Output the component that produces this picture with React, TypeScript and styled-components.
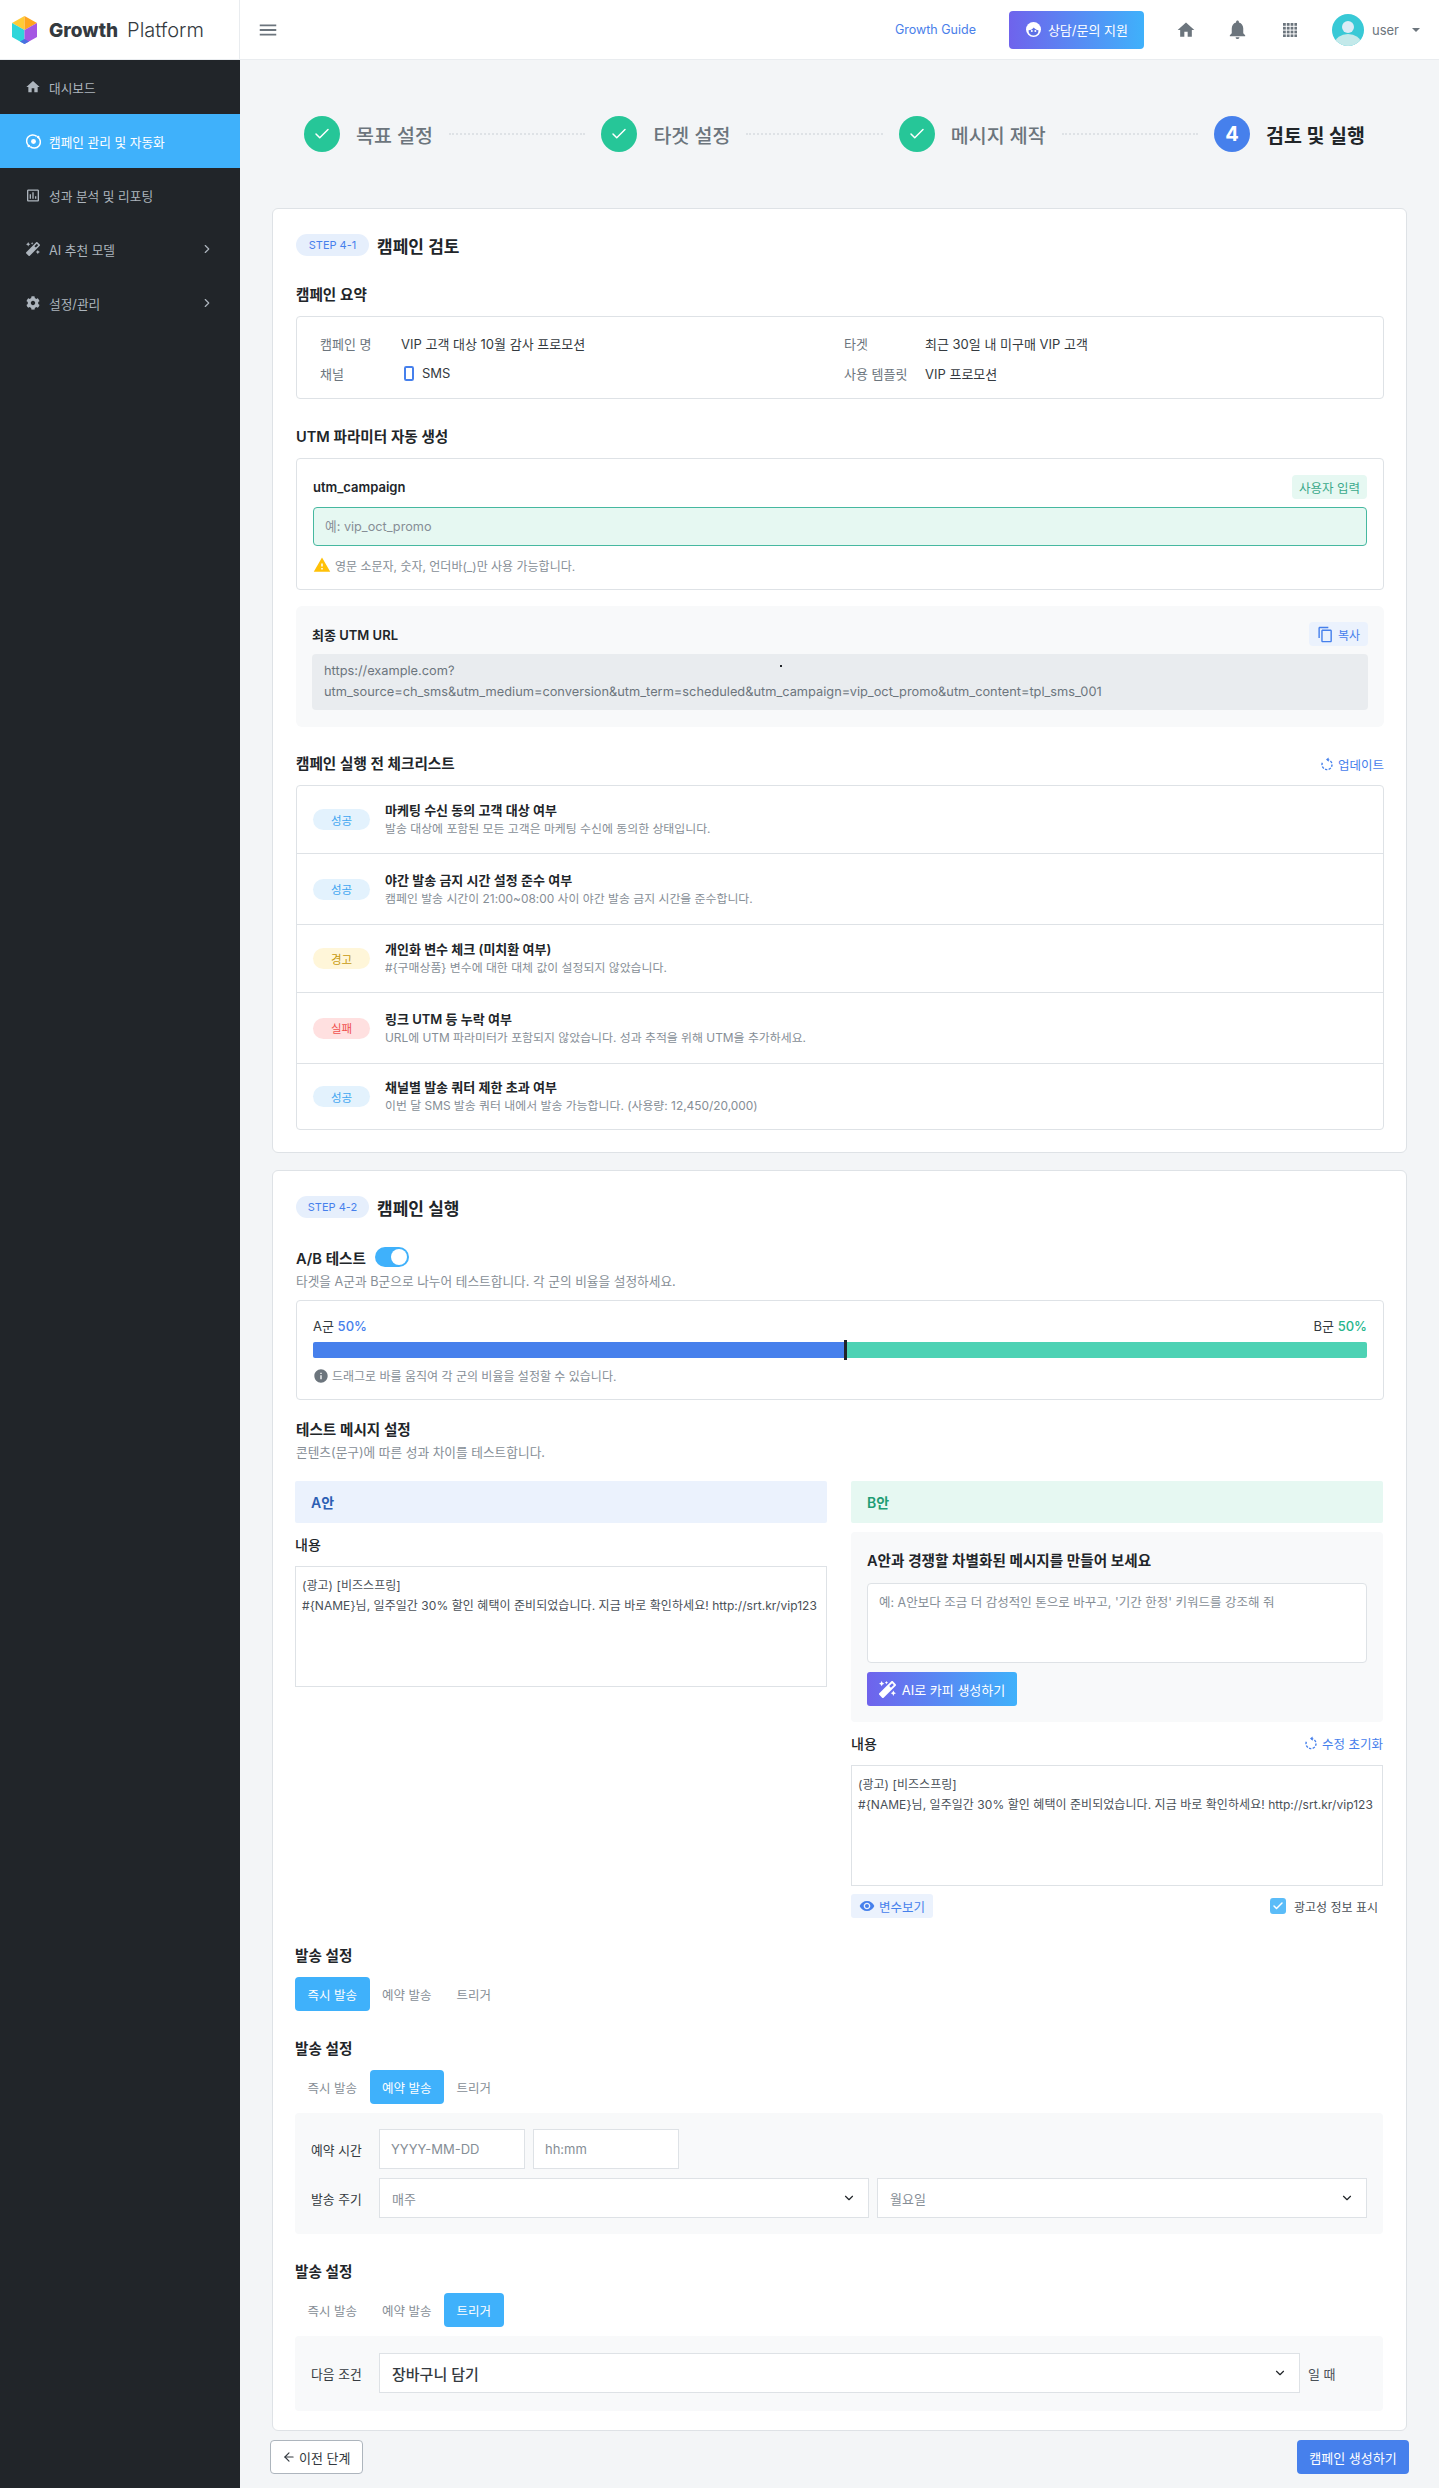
import styled, { createGlobalStyle } from 'styled-components';
import { ChevronDown, ChevronRight, Check, ArrowLeft } from 'lucide-react';
import { FaCog, FaMagic } from 'react-icons/fa';
import {
  MdContentCopy,
  MdHome,
  MdInfo,
  MdMenu,
  MdNotifications,
  MdOutlineAssessment,
  MdVisibility,
  MdWarning,
} from 'react-icons/md';

const GlobalStyle = createGlobalStyle`
  * { box-sizing: border-box; }
  body {
    margin: 0;
    background: #f3f5f7;
    color: #212529;
    font-family: Inter, "Noto Sans CJK KR", "Noto Sans", sans-serif;
    font-size: 14px;
  }
  input, textarea { font-family: inherit; }
`;

const Shell = styled.div`
  display: grid;
  grid-template-columns: 240px 1fr;
  grid-template-rows: 60px 1fr;
  min-height: 2488px;
`;

const LogoBar = styled.div`
  display: flex;
  align-items: center;
  gap: 12px;
  padding-left: 12px;
  background: #fff;
  border-right: 1px solid #e9ecef;
  border-bottom: 1px solid #e9ecef;
`;

const LogoText = styled.div`
  font-size: 20px;
  color: #343a40;
  font-weight: 300;
  white-space: nowrap;
  b {
    font-size: 19px;
    font-weight: 800;
    margin-right: 9px;
  }
`;

const TopBar = styled.header`
  display: flex;
  align-items: center;
  background: #fff;
  border-bottom: 1px solid #e9ecef;
  padding-left: 17px;
  color: #6c757d;
`;

const GuideLink = styled.a`
  margin-left: auto;
  color: #4a80ea;
  font-size: 12.5px;
`;

const SupportButton = styled.button`
  display: flex;
  align-items: center;
  justify-content: center;
  gap: 6px;
  width: 135px;
  height: 38px;
  margin-left: 33px;
  border: 0;
  border-radius: 4px;
  background: linear-gradient(90deg, #6f63ec, #3fb1fb);
  color: #fff;
  font-size: 13px;
  font-family: inherit;
`;

const TopIcons = styled.div`
  display: grid;
  grid-template-columns: repeat(3, 52px);
  justify-items: center;
  align-items: center;
  margin-left: 16px;
  color: #6c757d;
`;

const UserMenu = styled.div`
  display: flex;
  align-items: center;
  margin: 0 19px 0 16px;
  font-size: 13px;
  color: #6c757d;
  span {
    margin: 0 13px 0 8px;
  }
`;

const Caret = styled.i`
  width: 0;
  height: 0;
  border-left: 4px solid transparent;
  border-right: 4px solid transparent;
  border-top: 4px solid #6c757d;
`;

const Sidebar = styled.nav`
  background: #212529;
`;

const NavItem = styled.div<{ $active?: boolean }>`
  display: flex;
  align-items: center;
  gap: 8px;
  height: 54px;
  padding: 0 25px;
  font-size: 12.7px;
  background: ${(p) => (p.$active ? '#3fb1fb' : 'transparent')};
  color: ${(p) => (p.$active ? '#fff' : '#adb5bd')};
  svg.more {
    margin-left: auto;
    margin-right: 1px;
  }
`;

const NavIcon = styled.span`
  display: flex;
  align-items: center;
  justify-content: center;
  width: 16px;
`;

const Main = styled.main`
  padding: 0 32px;
`;

const Steps = styled.div`
  display: flex;
  align-items: center;
  padding: 56px 42px 56px 32px;
`;

const Step = styled.div`
  display: flex;
  align-items: center;
  gap: 16px;
`;

const StepDot = styled.div<{ $current?: boolean }>`
  display: flex;
  align-items: center;
  justify-content: center;
  width: 36px;
  height: 36px;
  border-radius: 50%;
  background: ${(p) => (p.$current ? '#4680ec' : '#26c698')};
  color: #fff;
  font-size: 20px;
  font-weight: 700;
`;

const StepLabel = styled.div<{ $current?: boolean }>`
  font-size: 19.5px;
  font-weight: ${(p) => (p.$current ? 700 : 500)};
  color: ${(p) => (p.$current ? '#212529' : '#6c757d')};
  white-space: nowrap;
`;

const StepLine = styled.div`
  flex: 1;
  margin: 0 16px;
  border-top: 2px dotted #dee2e6;
`;

const Card = styled.section<{ $pb: number }>`
  position: relative;
  background: #fff;
  border: 1px solid #dee2e6;
  border-radius: 6px;
  padding: 25px 22px ${(p) => p.$pb}px 23px;
  margin-bottom: 17px;
`;

const CardHead = styled.div`
  display: flex;
  align-items: center;
  gap: 8px;
  height: 22px;
  margin-bottom: 28px;
`;

const StepPill = styled.span`
  display: flex;
  align-items: center;
  justify-content: center;
  width: 73px;
  height: 22px;
  border-radius: 11px;
  background: #e6effc;
  color: #4680ec;
  font-size: 11px;
`;

const CardTitle = styled.h2`
  margin: 0;
  font-size: 17px;
  font-weight: 600;
`;

const SectionTitle = styled.h3<{ $mb?: number }>`
  margin: 0 0 ${(p) => p.$mb ?? 10}px;
  font-size: 14.6px;
  line-height: 22px;
  font-weight: 600;
`;

const SummaryBox = styled.div`
  display: grid;
  grid-template-columns: 81px 443px 81px 1fr;
  grid-auto-rows: 30px;
  align-items: center;
  height: 83px;
  padding: 11px 23px;
  border: 1px solid #dee2e6;
  border-radius: 4px;
  margin-bottom: 27px;
  font-size: 13px;
`;

const SummaryLabel = styled.div`
  color: #6c757d;
`;

const SummaryValue = styled.div`
  display: flex;
  align-items: center;
  gap: 8px;
  color: #343a40;
`;

const PhoneIcon = styled.svg`
  margin-left: 3px;
`;

const Panel = styled.div`
  height: 132px;
  padding: 16px;
  border: 1px solid #dee2e6;
  border-radius: 4px;
  margin-bottom: 16px;
`;

const PanelHead = styled.div`
  display: flex;
  align-items: center;
  justify-content: space-between;
  height: 24px;
  margin-bottom: 8px;
  font-size: 13px;
  font-weight: 600;
`;

const InputBadge = styled.span`
  display: flex;
  align-items: center;
  height: 24px;
  padding: 0 7px;
  border-radius: 4px;
  background: #e6f8f2;
  color: #3aa98a;
  font-size: 12.5px;
  font-weight: 400;
`;

const GreenInput = styled.input`
  display: block;
  width: 100%;
  height: 39px;
  padding: 0 11px;
  border: 1px solid #46b8a0;
  border-radius: 4px;
  background: #e6f8f2;
  font-size: 12.7px;
  &::placeholder {
    color: #868e96;
  }
`;

const Hint = styled.div`
  display: flex;
  align-items: center;
  gap: 4px;
  margin-top: 10px;
  font-size: 12px;
  color: #868e96;
`;

const UrlPanel = styled.div`
  position: relative;
  height: 121px;
  padding: 16px;
  border-radius: 6px;
  background: #f8f9fa;
  margin-bottom: 26px;
`;

const CopyButton = styled.span`
  display: flex;
  align-items: center;
  gap: 4px;
  height: 24px;
  padding: 0 8px;
  border-radius: 4px;
  background: #ebf2fd;
  color: #4680ec;
  font-size: 12px;
  font-weight: 400;
`;

const UrlBox = styled.div`
  height: 56px;
  padding: 7px 12px;
  border-radius: 4px;
  background: #e9ecef;
  color: #6c757d;
  font-size: 12.8px;
  text-rendering: geometricPrecision;
  line-height: 21px;
  white-space: nowrap;
`;

const Speck = styled.i`
  position: absolute;
  left: 484px;
  top: 59px;
  width: 2px;
  height: 2px;
  background: #212529;
`;

const TitleRow = styled.div`
  display: flex;
  align-items: center;
  justify-content: space-between;
  margin-bottom: 10px;
  h3 {
    margin: 0;
  }
`;

const LinkAction = styled.span`
  display: flex;
  align-items: center;
  gap: 4px;
  color: #4680ec;
  font-size: 12.5px;
  font-weight: 400;
`;

const CheckList = styled.div`
  border: 1px solid #dee2e6;
  border-radius: 4px;
`;

const CheckRow = styled.div<{ $h: number }>`
  display: flex;
  align-items: center;
  gap: 15px;
  height: ${(p) => p.$h}px;
  padding: 0 16px;
  & + & {
    border-top: 1px solid #dee2e6;
  }
`;

const tones = {
  ok: ['#e3f2fd', '#3fa5f0'],
  warn: ['#fff6d9', '#c79a10'],
  fail: ['#ffe0e0', '#f0524f'],
};

const StatusBadge = styled.span<{ $tone: keyof typeof tones }>`
  display: flex;
  align-items: center;
  justify-content: center;
  flex: none;
  width: 57px;
  height: 21px;
  border-radius: 11px;
  background: ${(p) => tones[p.$tone][0]};
  color: ${(p) => tones[p.$tone][1]};
  font-size: 11.5px;
`;

const CheckTitle = styled.div`
  font-size: 13px;
  font-weight: 600;
  line-height: 19px;
`;

const CheckSub = styled.div`
  font-size: 11.9px;
  line-height: 18px;
  color: #868e96;
`;

const AbRow = styled.div`
  display: flex;
  align-items: center;
  gap: 9px;
  height: 22px;
  margin-bottom: 4px;
  font-size: 14.6px;
  font-weight: 600;
`;

const Toggle = styled.span`
  position: relative;
  display: block;
  width: 34px;
  height: 20px;
  border-radius: 10px;
  background: #3fb1fb;
  &::after {
    content: '';
    position: absolute;
    top: 2px;
    right: 2px;
    width: 16px;
    height: 16px;
    border-radius: 50%;
    background: #fff;
  }
`;

const Muted = styled.div<{ $mb: number }>`
  margin-bottom: ${(p) => p.$mb}px;
  font-size: 12.7px;
  line-height: 20px;
  color: #868e96;
`;

const SplitBox = styled.div`
  height: 100px;
  padding: 16px;
  border: 1px solid #dee2e6;
  border-radius: 4px;
  margin-bottom: 19px;
`;

const SplitLabels = styled.div`
  display: flex;
  justify-content: space-between;
  margin-bottom: 6px;
  font-size: 13px;
  line-height: 19px;
  color: #343a40;
`;

const Percent = styled.span<{ $color: string }>`
  color: ${(p) => p.$color};
  font-weight: 500;
`;

const SplitBar = styled.div`
  position: relative;
  display: flex;
  height: 16px;
  margin-bottom: 9px;
`;

const SplitPart = styled.div<{ $color: string; $left?: boolean }>`
  background: ${(p) => p.$color};
  border-radius: ${(p) => (p.$left ? '2px 0 0 2px' : '0 2px 2px 0')};
`;

const SplitHandle = styled.i`
  position: absolute;
  top: -2px;
  width: 3px;
  height: 20px;
  margin-left: -1px;
  background: #212529;
`;

const SplitHint = styled.div`
  display: flex;
  align-items: center;
  gap: 3px;
  font-size: 12px;
  color: #868e96;
`;

const SendArea = styled.div`
  margin: 0 1px 0 -1px;
`;

const Columns = styled.div`
  display: grid;
  grid-template-columns: 1fr 1fr;
  gap: 24px;
  margin-bottom: 27px;
`;

const VariantBand = styled.div<{ $b?: boolean }>`
  display: flex;
  align-items: center;
  height: 42px;
  padding: 0 16px;
  border-radius: 2px;
  background: ${(p) => (p.$b ? '#e6f8f2' : '#ebf2fd')};
  color: ${(p) => (p.$b ? '#1f9d74' : '#2c5fb3')};
  font-size: 14px;
  font-weight: 600;
`;

const FieldHead = styled.div<{ $mt: number }>`
  display: flex;
  align-items: center;
  justify-content: space-between;
  height: 22px;
  margin: ${(p) => p.$mt}px 0 11px;
  font-size: 14px;
  font-weight: 500;
`;

const MessageBox = styled.div`
  height: 121px;
  padding: 9px 5px 9px 6px;
  border: 1px solid #dee2e6;
  font-size: 12px;
  letter-spacing: 0.05px;
  line-height: 20px;
  color: #495057;
`;

const GenPanel = styled.div`
  height: 190px;
  margin-top: 9px;
  padding: 18px 16px 0;
  border-radius: 4px;
  background: #f8f9fa;
`;

const GenTitle = styled.div`
  margin-bottom: 11px;
  font-size: 14.6px;
  line-height: 22px;
  font-weight: 600;
`;

const GenInput = styled.textarea`
  display: block;
  width: 100%;
  height: 80px;
  padding: 8px 11px;
  border: 1px solid #dee2e6;
  border-radius: 4px;
  background: #fff;
  font-size: 12.5px;
  resize: none;
  &::placeholder {
    color: #868e96;
  }
`;

const GenButton = styled.button`
  display: flex;
  align-items: center;
  justify-content: center;
  gap: 6px;
  width: 150px;
  height: 34px;
  margin-top: 9px;
  border: 0;
  border-radius: 3px;
  background: linear-gradient(90deg, #6f63ec, #3fb1fb);
  color: #fff;
  font-family: inherit;
  font-size: 13px;
`;

const MessageFoot = styled.div`
  display: flex;
  align-items: center;
  justify-content: space-between;
  margin-top: 8px;
  padding-right: 5px;
`;

const VarButton = styled.span`
  display: flex;
  align-items: center;
  gap: 4px;
  height: 24px;
  padding: 0 8px;
  border-radius: 3px;
  background: #ebf2fd;
  color: #4680ec;
  font-size: 12.5px;
`;

const AdCheck = styled.label`
  display: flex;
  align-items: center;
  gap: 8px;
  font-size: 12px;
  color: #495057;
`;

const CheckBox = styled.span`
  display: flex;
  align-items: center;
  justify-content: center;
  width: 16px;
  height: 16px;
  border-radius: 3px;
  background: #5bbcf8;
  color: #fff;
`;

const TabGroup = styled.div<{ $mb: number }>`
  display: flex;
  margin-bottom: ${(p) => p.$mb}px;
`;

const Tab = styled.span<{ $active?: boolean }>`
  display: flex;
  align-items: center;
  height: 34px;
  padding: 0 12.5px;
  border-radius: 4px;
  font-size: 12.5px;
  background: ${(p) => (p.$active ? '#3fb1fb' : 'transparent')};
  color: ${(p) => (p.$active ? '#fff' : '#868e96')};
`;

const GrayPanel = styled.div<{ $h: number; $mb: number }>`
  height: ${(p) => p.$h}px;
  margin-bottom: ${(p) => p.$mb}px;
  padding: 16px 16px 0;
  border-radius: 4px;
  background: #f8f9fa;
`;

const FormRow = styled.div<{ $mt?: number }>`
  display: flex;
  align-items: center;
  gap: 8px;
  margin-top: ${(p) => p.$mt ?? 0}px;
`;

const FormLabel = styled.div`
  flex: none;
  width: 60px;
  font-size: 12.8px;
  color: #343a40;
`;

const PlainInput = styled.input`
  width: 146px;
  height: 40px;
  padding: 0 11px;
  border: 1px solid #dee2e6;
  background: #fff;
  font-size: 13px;
  &::placeholder {
    color: #868e96;
  }
`;

const FakeSelect = styled.div<{ $strong?: boolean }>`
  flex: 1;
  display: flex;
  align-items: center;
  justify-content: space-between;
  height: 40px;
  padding: 0 12px;
  border: 1px solid #dee2e6;
  background: #fff;
  font-size: ${(p) => (p.$strong ? '15px' : '13px')};
  font-weight: ${(p) => (p.$strong ? 500 : 400)};
  color: ${(p) => (p.$strong ? '#343a40' : '#868e96')};
  svg {
    color: #212529;
  }
`;

const WhenText = styled.div`
  flex: none;
  width: 59px;
  font-size: 13px;
  color: #495057;
`;

const Footer = styled.div`
  display: flex;
  justify-content: space-between;
  margin: -8px -2px 14px -2px;
`;

const BackButton = styled.button`
  display: flex;
  align-items: center;
  gap: 3px;
  height: 34px;
  padding: 0 11px;
  border: 1px solid #adb5bd;
  border-radius: 4px;
  background: #fff;
  color: #343a40;
  font-family: inherit;
  font-size: 13px;
`;

const CreateButton = styled.button`
  width: 112px;
  height: 34px;
  border: 0;
  border-radius: 4px;
  background: #4680ec;
  color: #fff;
  font-family: inherit;
  font-size: 13px;
`;

function LogoCube() {
  return (
    <svg width="25" height="28" viewBox="0 0 25 28">
      <polygon points="12.5,0 0,7 12.5,14" fill="#ffcb37" />
      <polygon points="12.5,0 25,7 12.5,14" fill="#ffa51f" />
      <polygon points="0,7 12.5,14 12.5,28 0,21" fill="#2fd6da" />
      <polygon points="25,7 12.5,14 12.5,28 25,21" fill="#a557e3" />
      <polygon points="8,25.5 12.5,23 17,25.5 12.5,28" fill="#4a6fe0" />
    </svg>
  );
}

function CampaignIcon() {
  return (
    <svg width="15" height="15" viewBox="0 0 16 16" fill="none" stroke="currentColor" strokeWidth="1.6">
      <path d="M3 12.5A6.5 6.5 0 0 1 11.5 2.5" />
      <path d="M13 3.5A6.5 6.5 0 0 1 4.5 13.5" />
      <circle cx="8" cy="8" r="2.6" fill="currentColor" stroke="none" />
      <circle cx="13" cy="3.2" r="1.4" fill="currentColor" stroke="none" />
      <circle cx="3" cy="12.8" r="1.4" fill="currentColor" stroke="none" />
    </svg>
  );
}

function AgentIcon() {
  return (
    <svg width="17" height="17" viewBox="0 0 17 17">
      <circle cx="8.5" cy="8.5" r="7.5" fill="#fff" />
      <path d="M3.6 9.2c2 0 4.2-1 5.2-2.6 1 1.4 2.6 2.6 4.6 2.6v1a4.9 4.4 0 0 1-9.8 0z" fill="#5c6fe6" />
      <circle cx="6.8" cy="10" r="1" fill="#fff" />
      <circle cx="10.4" cy="10" r="1" fill="#fff" />
    </svg>
  );
}

function Avatar() {
  return (
    <svg width="32" height="32" viewBox="0 0 32 32">
      <clipPath id="avatarClip">
        <circle cx="16" cy="16" r="16" />
      </clipPath>
      <g clipPath="url(#avatarClip)">
        <rect width="32" height="32" fill="#38c9d6" />
        <ellipse cx="16" cy="29" rx="13" ry="9" fill="#c3e9ea" />
        <circle cx="16" cy="13" r="6" fill="#dcecf6" />
      </g>
    </svg>
  );
}

function GridDots() {
  const pts = [0, 1, 2, 3];
  return (
    <svg width="14" height="14" viewBox="0 0 14 14" fill="currentColor">
      {pts.flatMap((r) => pts.map((c) => <rect key={`${r}-${c}`} x={c * 3.8} y={r * 3.8} width="2.8" height="2.8" />))}
    </svg>
  );
}

function ResetIcon() {
  return (
    <svg width="14" height="14" viewBox="0 0 14 14" fill="none" stroke="currentColor" strokeWidth="1.4">
      <path d="M7 2.6a5 5 0 1 1-4.6 3" strokeDasharray="2.4 1.3" />
      <path d="M8.6 0.4 6 2.6l2.6 2.2" fill="currentColor" stroke="none" />
    </svg>
  );
}

const campaignName = 'VIP 고객 대상 10월 감사 프로모션';

const checks = [
  { tone: 'ok', label: '성공', h: 67, title: '마케팅 수신 동의 고객 대상 여부', sub: '발송 대상에 포함된 모든 고객은 마케팅 수신에 동의한 상태입니다.' },
  { tone: 'ok', label: '성공', h: 71, title: '야간 발송 금지 시간 설정 준수 여부', sub: '캠페인 발송 시간이 21:00~08:00 사이 야간 발송 금지 시간을 준수합니다.' },
  { tone: 'warn', label: '경고', h: 68, title: '개인화 변수 체크 (미치환 여부)', sub: '#{구매상품} 변수에 대한 대체 값이 설정되지 않았습니다.' },
  { tone: 'fail', label: '실패', h: 71, title: '링크 UTM 등 누락 여부', sub: 'URL에 UTM 파라미터가 포함되지 않았습니다. 성과 추적을 위해 UTM을 추가하세요.' },
  { tone: 'ok', label: '성공', h: 66, title: '채널별 발송 쿼터 제한 초과 여부', sub: '이번 달 SMS 발송 쿼터 내에서 발송 가능합니다. (사용량: 12,450/20,000)' },
] as const;

const sendModes = ['즉시 발송', '예약 발송', '트리거'];

function SendTabs({ active, mb }: { active: number; mb: number }) {
  return (
    <TabGroup $mb={mb}>
      {sendModes.map((mode, i) => (
        <Tab key={mode} $active={i === active}>
          {mode}
        </Tab>
      ))}
    </TabGroup>
  );
}

function Message() {
  return (
    <>
      (광고) [비즈스프링]
      <br />
      {'#{NAME}님, 일주일간 30% 할인 혜택이 준비되었습니다. 지금 바로 확인하세요! http://srt.kr/vip123'}
    </>
  );
}

export default function App() {
  const splitA = 50.5;

  return (
    <>
      <GlobalStyle />
      <Shell>
        <LogoBar>
          <LogoCube />
          <LogoText>
            <b>Growth</b>Platform
          </LogoText>
        </LogoBar>
        <TopBar>
          <MdMenu size={22} />
          <GuideLink>Growth Guide</GuideLink>
          <SupportButton>
            <AgentIcon />
            상담/문의 지원
          </SupportButton>
          <TopIcons>
            <MdHome size={20} />
            <MdNotifications size={23} />
            <GridDots />
          </TopIcons>
          <UserMenu>
            <Avatar />
            <span>user</span>
            <Caret />
          </UserMenu>
        </TopBar>

        <Sidebar>
          <NavItem>
            <NavIcon>
              <MdHome size={16} />
            </NavIcon>
            대시보드
          </NavItem>
          <NavItem $active>
            <NavIcon>
              <CampaignIcon />
            </NavIcon>
            캠페인 관리 및 자동화
          </NavItem>
          <NavItem>
            <NavIcon>
              <MdOutlineAssessment size={17} />
            </NavIcon>
            성과 분석 및 리포팅
          </NavItem>
          <NavItem>
            <NavIcon>
              <FaMagic size={14} />
            </NavIcon>
            AI 추천 모델
            <ChevronRight className="more" size={14} />
          </NavItem>
          <NavItem>
            <NavIcon>
              <FaCog size={14} />
            </NavIcon>
            설정/관리
            <ChevronRight className="more" size={14} />
          </NavItem>
        </Sidebar>

        <Main>
          <Steps>
            <Step>
              <StepDot>
                <Check size={18} strokeWidth={2} />
              </StepDot>
              <StepLabel>목표 설정</StepLabel>
            </Step>
            <StepLine />
            <Step>
              <StepDot>
                <Check size={18} strokeWidth={2} />
              </StepDot>
              <StepLabel>타겟 설정</StepLabel>
            </Step>
            <StepLine />
            <Step>
              <StepDot>
                <Check size={18} strokeWidth={2} />
              </StepDot>
              <StepLabel>메시지 제작</StepLabel>
            </Step>
            <StepLine />
            <Step>
              <StepDot $current>4</StepDot>
              <StepLabel $current>검토 및 실행</StepLabel>
            </Step>
          </Steps>

          <Card $pb={22}>
            <CardHead>
              <StepPill>STEP 4-1</StepPill>
              <CardTitle>캠페인 검토</CardTitle>
            </CardHead>

            <SectionTitle>캠페인 요약</SectionTitle>
            <SummaryBox>
              <SummaryLabel>캠페인 명</SummaryLabel>
              <SummaryValue>{campaignName}</SummaryValue>
              <SummaryLabel>타겟</SummaryLabel>
              <SummaryValue>최근 30일 내 미구매 VIP 고객</SummaryValue>
              <SummaryLabel>채널</SummaryLabel>
              <SummaryValue>
                <PhoneIcon width="10" height="15" viewBox="0 0 10 15">
                  <rect x="1" y="1" width="8" height="13" rx="1.2" fill="#fff" stroke="#4680ec" strokeWidth="2" />
                </PhoneIcon>
                SMS
              </SummaryValue>
              <SummaryLabel>사용 템플릿</SummaryLabel>
              <SummaryValue>VIP 프로모션</SummaryValue>
            </SummaryBox>

            <SectionTitle>UTM 파라미터 자동 생성</SectionTitle>
            <Panel>
              <PanelHead>
                utm_campaign
                <InputBadge>사용자 입력</InputBadge>
              </PanelHead>
              <GreenInput placeholder="예: vip_oct_promo" />
              <Hint>
                <MdWarning size={18} color="#ffc107" />
                영문 소문자, 숫자, 언더바(_)만 사용 가능합니다.
              </Hint>
            </Panel>

            <UrlPanel>
              <Speck />
              <PanelHead>
                최종 UTM URL
                <CopyButton>
                  <MdContentCopy size={17} />
                  복사
                </CopyButton>
              </PanelHead>
              <UrlBox>
                https://example.com?
                <br />
                utm_source=ch_sms&utm_medium=conversion&utm_term=scheduled&utm_campaign=vip_oct_promo&utm_content=tpl_sms_001
              </UrlBox>
            </UrlPanel>

            <TitleRow>
              <SectionTitle>캠페인 실행 전 체크리스트</SectionTitle>
              <LinkAction>
                <ResetIcon />
                업데이트
              </LinkAction>
            </TitleRow>
            <CheckList>
              {checks.map((c) => (
                <CheckRow key={c.title} $h={c.h}>
                  <StatusBadge $tone={c.tone}>{c.label}</StatusBadge>
                  <div>
                    <CheckTitle>{c.title}</CheckTitle>
                    <CheckSub>{c.sub}</CheckSub>
                  </div>
                </CheckRow>
              ))}
            </CheckList>
          </Card>

          <Card $pb={19}>
            <CardHead>
              <StepPill>STEP 4-2</StepPill>
              <CardTitle>캠페인 실행</CardTitle>
            </CardHead>

            <AbRow>
              A/B 테스트
              <Toggle />
            </AbRow>
            <Muted $mb={8}>타겟을 A군과 B군으로 나누어 테스트합니다. 각 군의 비율을 설정하세요.</Muted>
            <SplitBox>
              <SplitLabels>
                <span>
                  A군 <Percent $color="#4680ec">50%</Percent>
                </span>
                <span>
                  B군 <Percent $color="#26b58c">50%</Percent>
                </span>
              </SplitLabels>
              <SplitBar>
                <SplitPart $left $color="#4680ec" style={{ width: `${splitA}%` }} />
                <SplitPart $color="#4dd2b4" style={{ width: `${100 - splitA}%` }} />
                <SplitHandle style={{ left: `${splitA}%` }} />
              </SplitBar>
              <SplitHint>
                <MdInfo size={16} color="#6c757d" />
                드래그로 바를 움직여 각 군의 비율을 설정할 수 있습니다.
              </SplitHint>
            </SplitBox>

            <SectionTitle $mb={2}>테스트 메시지 설정</SectionTitle>
            <Muted $mb={18}>콘텐츠(문구)에 따른 성과 차이를 테스트합니다.</Muted>

            <SendArea>
              <Columns>
                <div>
                  <VariantBand>A안</VariantBand>
                  <FieldHead $mt={10}>내용</FieldHead>
                  <MessageBox>
                    <Message />
                  </MessageBox>
                </div>
                <div>
                  <VariantBand $b>B안</VariantBand>
                  <GenPanel>
                    <GenTitle>A안과 경쟁할 차별화된 메시지를 만들어 보세요</GenTitle>
                    <GenInput placeholder="예: A안보다 조금 더 감성적인 톤으로 바꾸고, '기간 한정' 키워드를 강조해 줘" />
                    <GenButton>
                      <FaMagic size={17} />
                      AI로 카피 생성하기
                    </GenButton>
                  </GenPanel>
                  <FieldHead $mt={10}>
                    내용
                    <LinkAction>
                      <ResetIcon />
                      수정 초기화
                    </LinkAction>
                  </FieldHead>
                  <MessageBox>
                    <Message />
                  </MessageBox>
                  <MessageFoot>
                    <VarButton>
                      <MdVisibility size={16} />
                      변수보기
                    </VarButton>
                    <AdCheck>
                      <CheckBox>
                        <Check size={12} strokeWidth={3} />
                      </CheckBox>
                      광고성 정보 표시
                    </AdCheck>
                  </MessageFoot>
                </div>
              </Columns>

              <SectionTitle>발송 설정</SectionTitle>
              <SendTabs active={0} mb={27} />

              <SectionTitle>발송 설정</SectionTitle>
              <SendTabs active={1} mb={9} />
              <GrayPanel $h={121} $mb={27}>
                <FormRow>
                  <FormLabel>예약 시간</FormLabel>
                  <PlainInput placeholder="YYYY-MM-DD" />
                  <PlainInput placeholder="hh:mm" />
                </FormRow>
                <FormRow $mt={9}>
                  <FormLabel>발송 주기</FormLabel>
                  <FakeSelect>
                    매주
                    <ChevronDown size={14} />
                  </FakeSelect>
                  <FakeSelect>
                    월요일
                    <ChevronDown size={14} />
                  </FakeSelect>
                </FormRow>
              </GrayPanel>

              <SectionTitle>발송 설정</SectionTitle>
              <SendTabs active={2} mb={9} />
              <GrayPanel $h={75} $mb={0}>
                <FormRow $mt={1}>
                  <FormLabel>다음 조건</FormLabel>
                  <FakeSelect $strong>
                    장바구니 담기
                    <ChevronDown size={14} />
                  </FakeSelect>
                  <WhenText>일 때</WhenText>
                </FormRow>
              </GrayPanel>
            </SendArea>
          </Card>

          <Footer>
            <BackButton>
              <ArrowLeft size={14} />
              이전 단계
            </BackButton>
            <CreateButton>캠페인 생성하기</CreateButton>
          </Footer>
        </Main>
      </Shell>
    </>
  );
}
